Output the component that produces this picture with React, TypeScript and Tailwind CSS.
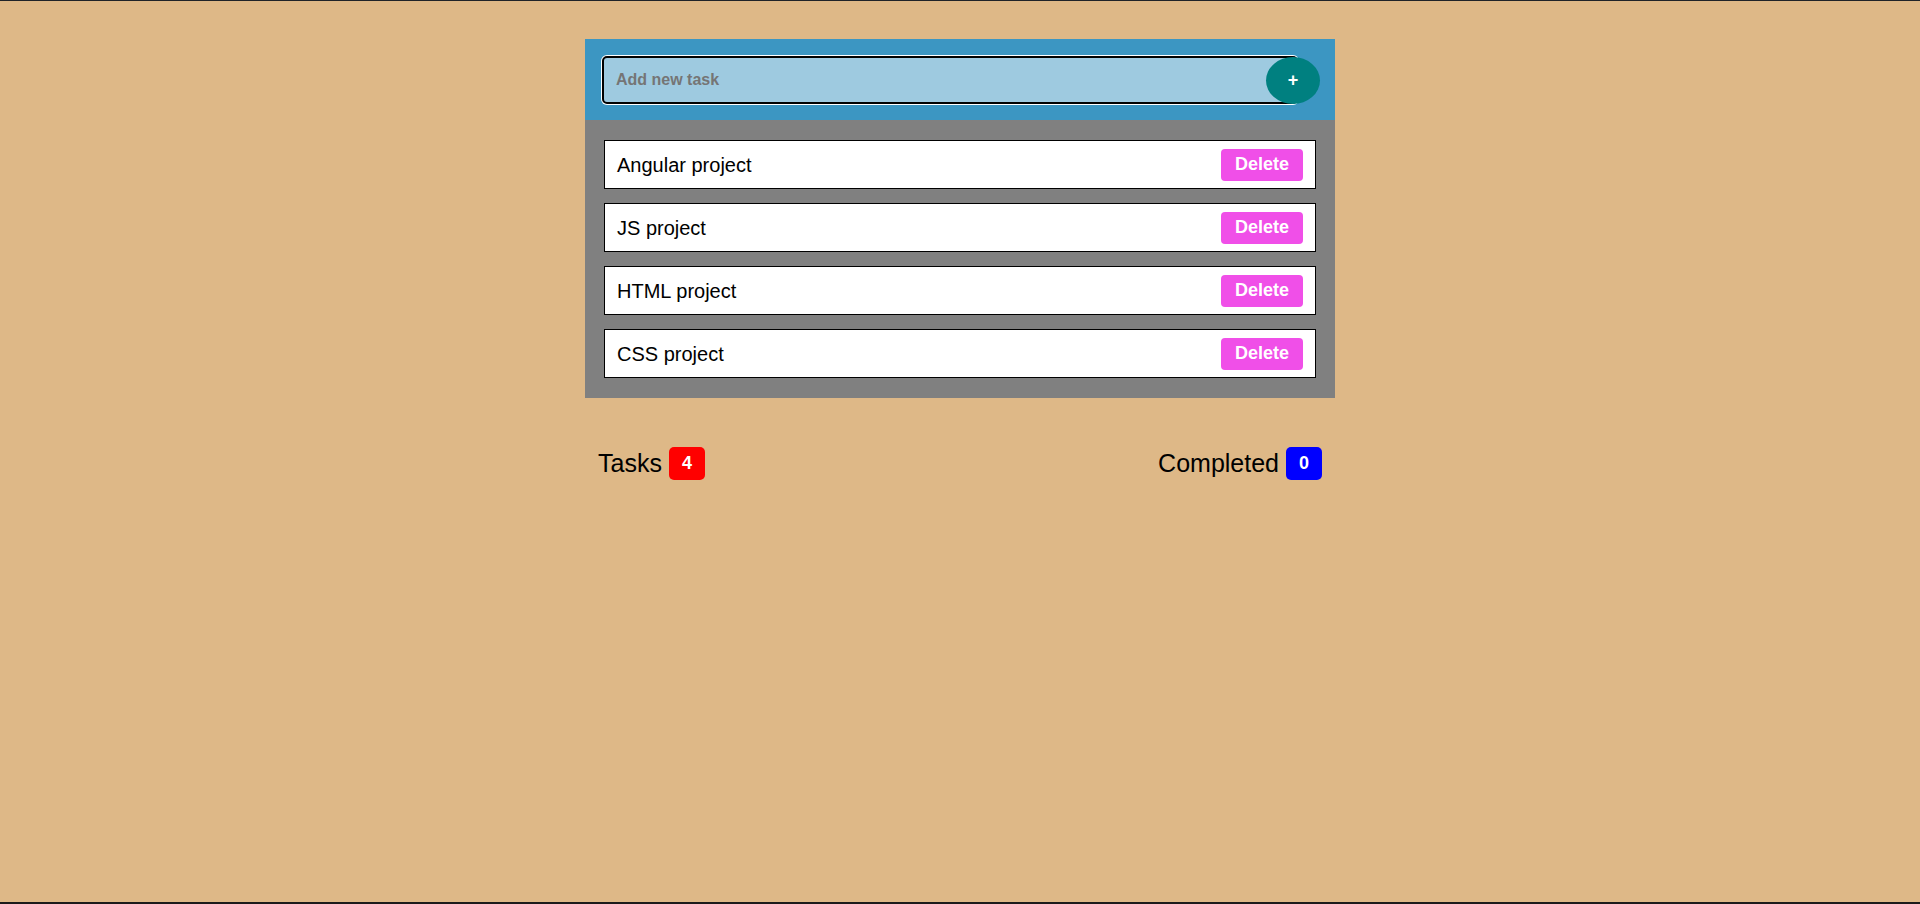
import React, { useState } from 'react';

const initialTasks = ['Angular project', 'JS project', 'HTML project', 'CSS project'];

export default function App() {
  const [tasks, setTasks] = useState<string[]>(initialTasks);
  const [text, setText] = useState('');

  const addTask = () => {
    if (!text.trim()) return;
    setTasks([...tasks, text.trim()]);
    setText('');
  };

  return (
    <div className="h-[904px] flex flex-col bg-[#deb887] border-t border-[#1f2328] font-['Liberation_Sans',Arial,sans-serif]">
      <div className="flex-1 pt-[38px]">
        <div className="w-[750px] mx-auto">
          {/* input band */}
          <div className="bg-[#3c96c2] pl-[17px] pr-[15px] pt-[16px] pb-[16px] flex items-center">
            <input
              autoFocus
              value={text}
              onChange={(e) => setText(e.target.value)}
              onKeyDown={(e) => e.key === 'Enter' && addTask()}
              placeholder="Add new task"
              className="flex-1 h-[48px] bg-[#9ecae0] border-2 border-black rounded-[5px] ring-1 ring-white outline-none pl-[12px] text-[16px] font-bold text-black placeholder:text-[#757575]"
            />
            <button
              onClick={addTask}
              className="w-[54px] h-[47px] -ml-[32px] mt-[2px] rounded-[50%] bg-[#008080] text-white text-[18px] font-bold flex items-center justify-center relative"
            >
              +
            </button>
          </div>

          {/* task list */}
          <div className="bg-[#808080] px-[19px] py-[20px] flex flex-col gap-[14px]">
            {tasks.map((t, i) => (
              <div key={i} className="h-[49px] bg-white border border-black flex items-center justify-between pl-[12px] pr-[12px]">
                <span className="text-[20px] text-black">{t}</span>
                <button
                  onClick={() => setTasks(tasks.filter((_, j) => j !== i))}
                  className="w-[82px] h-[32px] rounded-[4px] bg-[#f04fe8] text-white text-[18px] font-bold"
                >
                  Delete
                </button>
              </div>
            ))}
          </div>

          {/* counters */}
          <div className="mt-[47px] px-[13px] flex items-center justify-between">
            <div className="flex items-center gap-[7px]">
              <span className="text-[25px] text-black">Tasks</span>
              <span className="w-[36px] h-[33px] rounded-[5px] bg-[#ff0000] text-white text-[18px] font-bold flex items-center justify-center">{tasks.length}</span>
            </div>
            <div className="flex items-center gap-[7px]">
              <span className="text-[25px] text-black">Completed</span>
              <span className="w-[36px] h-[33px] rounded-[5px] bg-[#0000ff] text-white text-[18px] font-bold flex items-center justify-center">0</span>
            </div>
          </div>
        </div>
      </div>
      <div className="h-[2px] bg-[#1b1b1b]" />
    </div>
  );
}
